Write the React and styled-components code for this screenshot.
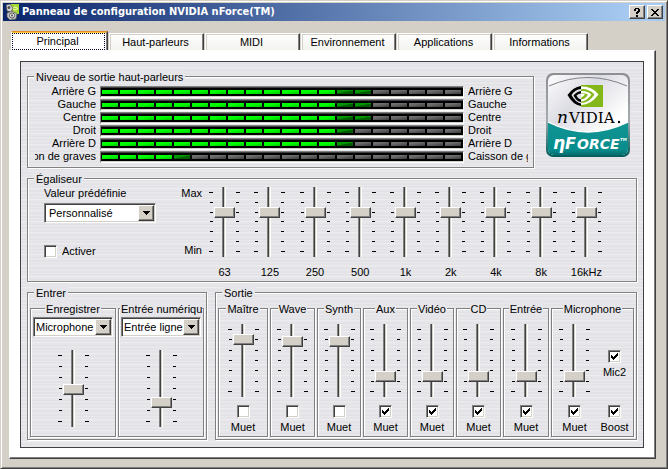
import React from 'react';
import styled, { createGlobalStyle, css } from 'styled-components';

const colors = {
  face: '#d4d0c8',
  shadow: '#808080',
  dark: '#404040',
  light: '#ffffff',
  metal: '#e6e6ea',
  navy: '#0a246a',
  sky: '#a6caf0'
};

const raised = css`
  border: 1px solid;
  border-color: ${colors.light} ${colors.dark} ${colors.dark} ${colors.light};
  box-shadow: inset -1px -1px 0 ${colors.shadow};
`;

const sunken = css`
  border: 1px solid;
  border-color: ${colors.shadow} ${colors.light} ${colors.light} ${colors.shadow};
  box-shadow: inset 1px 1px 0 ${colors.dark}, inset -1px -1px 0 ${colors.face};
`;

const GlobalStyle = createGlobalStyle`
  * {
    box-sizing: border-box;
  }

  body {
    margin: 0;
    background: ${colors.face};
  }

  body, button, input, select {
    font-family: "Liberation Sans", Arial, sans-serif;
    font-size: 11px;
    line-height: 13px;
    color: #000;
  }
`;

const Window = styled.main`
  min-height: 100vh;
  padding: 1px 2px 9px 1px;
  background: ${colors.face};
  border: 1px solid;
  border-color: ${colors.face} ${colors.dark} ${colors.dark} ${colors.face};
  box-shadow: inset 1px 1px 0 ${colors.light}, inset -1px -1px 0 ${colors.shadow};
`;

const TitleBar = styled.header`
  display: flex;
  align-items: center;
  gap: 2px;
  height: 18px;
  margin: 1px 0 0 1px;
  padding: 0 2px;
  background: linear-gradient(to right, ${colors.navy}, ${colors.sky} 95%);
`;

const Title = styled.h1`
  flex: 1;
  margin: 0;
  font: bold 11px/16px "DejaVu Sans Condensed", "DejaVu Sans", sans-serif;
  color: #fff;
  white-space: nowrap;
  overflow: hidden;
`;

const CaptionButton = styled.button`
  display: flex;
  align-items: center;
  justify-content: center;
  width: 16px;
  height: 14px;
  padding: 0;
  background: ${colors.face};
  ${raised}
`;

const Tabs = styled.nav`
  display: flex;
  align-items: flex-end;
  gap: 1px;
  height: 19px;
  margin: 10px 10px 0 9px;
`;

const Tab = styled.button`
  flex: 0 1 95px;
  height: 17px;
  padding: 0;
  border: 0;
  border-top: 1px solid ${colors.light};
  border-left: 1px solid ${colors.light};
  border-right: 1px solid ${colors.dark};
  box-shadow: inset -1px 0 0 ${colors.shadow}, inset 1px 1px 0 ${colors.face};
  background: linear-gradient(#fff, #f2f2ee);
  white-space: nowrap;

  ${props => props.$active && css`
    flex-basis: 97px;
    height: 19px;
    padding: 0 2px 0 0;
    border-top: 1px solid #e68b2c;
    box-shadow: inset -1px 0 0 ${colors.shadow}, inset 0 1px 0 #ffc73c;
    background: #fff;
  `}
`;

const TabText = styled.span`
  display: block;
  padding-right: 2px;
  line-height: 15px;
  border: 1px dotted ${props => (props.$active ? '#003' : 'transparent')};
`;

const Page = styled.section`
  margin: 0 9px 0 7px;
  padding: 10px 11px 10px 10px;
  background: #fff;
  border: 1px solid;
  border-color: ${colors.light} ${colors.dark} ${colors.dark} ${colors.light};
  box-shadow: inset -1px -1px 0 ${colors.shadow};
`;

const Panel = styled.div`
  padding: 6px 6px 7px;
  border: 1px solid ${colors.dark};
  background: repeating-linear-gradient(
    #e3e3e7 0 2px,
    #e9e9ec 2px 3px,
    #e4e4e8 3px 5px,
    #ededf0 5px 6px,
    #e6e6ea 6px 8px,
    #e1e1e5 8px 9px,
    #e8e8eb 9px 11px
  );
`;

const Row = styled.div`
  display: flex;
  align-items: flex-start;
  margin-bottom: 2px;
`;

const Group = styled.fieldset`
  min-width: 0;
  margin: 0;
  padding: 0;
  border: 1px solid ${colors.shadow};
  box-shadow: 1px 1px 0 ${colors.light}, inset 1px 1px 0 ${colors.light};
`;

const Legend = styled.legend`
  max-width: 100%;
  margin: 0 auto 0 6px;
  padding: 3px 2px 0;
  background: ${colors.metal};
  white-space: nowrap;
  overflow: hidden;
`;

const ChannelLegend = styled(Legend)`
  max-width: calc(100% - 2px);
  margin: 0 auto;
  padding: 3px 1px 0;
`;

const WideGroup = styled(Group)`
  flex: 1;
`;

const Levels = styled.div`
  padding: 1px 5px 4px 7px;
`;

const LevelRow = styled.div`
  display: grid;
  grid-template-columns: 61px 1fr 60px;
  column-gap: 4px;
  height: 13px;
`;

const LevelName = styled.span`
  display: flex;
  justify-content: ${props => (props.$end ? 'flex-end' : 'flex-start')};
  white-space: nowrap;
  overflow: hidden;
`;

const Meter = styled.div`
  display: flex;
  gap: 2px;
  height: 12px;
  margin-top: 1px;
  padding: 3px 2px 3px 1px;
  background: #000;
  border: 1px solid;
  border-color: ${colors.shadow} ${colors.light} ${colors.light} ${colors.shadow};
  box-shadow: inset 0 1px 0 ${colors.dark}, inset 0 -1px 0 ${colors.face};
`;

const segments = {
  on: 'linear-gradient(170deg, #00ff00 40%, #00c800)',
  peak: 'linear-gradient(170deg, #009800 45%, #005c00 55%)',
  off: 'linear-gradient(170deg, #6e6e6e 30%, #3c3c3c)'
};

const Segment = styled.span`
  flex: 1;
  background: ${props => segments[props.$state]};
`;

const Badge = styled.svg`
  flex: none;
  width: 84px;
  height: 84px;
  margin: 5px 7px 0 12px;
`;

const Equalizer = styled.div`
  display: flex;
  padding: 1px 27px 2px 16px;
`;

const Presets = styled.div`
  display: flex;
  flex-direction: column;
  width: 112px;
`;

const Label = styled.label`
  white-space: nowrap;
`;

const Combo = styled.div`
  display: grid;
  height: 20px;
  padding: 1px;
  background: #fff;
  ${sunken}
`;

const PresetCombo = styled(Combo)`
  margin: 3px 0 22px;
`;

const Select = styled.select`
  grid-area: 1 / 1;
  min-width: 0;
  width: 100%;
  padding: 0 0 0 ${props => (props.$compact ? '1px' : '3px')};
  border: 0;
  background: transparent;
  appearance: none;
  outline: 0;
`;

const Arrow = styled.span`
  grid-area: 1 / 1;
  justify-self: end;
  display: flex;
  align-items: center;
  justify-content: center;
  width: 16px;
  background: ${colors.face};
  pointer-events: none;
  ${raised}
`;

const CheckLabel = styled.label`
  display: flex;
  flex-direction: ${props => (props.$stacked ? 'column' : 'row')};
  align-items: center;
  gap: ${props => (props.$stacked ? '3px' : '5px')};
`;

const CheckBox = styled.input`
  width: 13px;
  height: 13px;
  margin: 0;
  appearance: none;
  background: #fff;
  ${sunken}

  &:checked {
    background: #fff url("data:image/svg+xml,%3Csvg xmlns='http://www.w3.org/2000/svg' width='7' height='7' shape-rendering='crispEdges'%3E%3Cpath d='M0 2h1v1h1v1h1v-1h1v-1h1v-1h1v-1h1v3h-1v1h-1v1h-1v1h-1v1h-1v-1h-1v-1h-1z'/%3E%3C/svg%3E") 2px 2px no-repeat;
  }
`;

const Range = styled.div`
  display: flex;
  flex-direction: column;
  justify-content: space-between;
  width: 46px;
  height: 70px;
  text-align: right;
`;

const Bands = styled.div`
  flex: 1;
  display: grid;
  grid-template-columns: repeat(9, 1fr);
`;

const Band = styled.label`
  display: flex;
  flex-direction: column;
  align-items: center;
  gap: 9px;
`;

const SliderBox = styled.span`
  display: flex;
  justify-content: center;
  gap: 1px;
  height: ${props => props.$length}px;
`;

const Ticks = styled.span`
  display: flex;
  flex-direction: column;
  justify-content: space-between;
  align-items: ${props => (props.$left ? 'flex-end' : 'flex-start')};
  width: 4px;
  padding: 5px 0;
`;

const Tick = styled.span`
  width: 3px;
  height: 1px;
  background: #000;

  &:first-child, &:last-child {
    width: 4px;
  }
`;

const SliderInput = styled.input`
  writing-mode: vertical-lr;
  direction: rtl;
  appearance: none;
  width: 21px;
  height: 100%;
  margin: 0;
  outline: 0;
  background: linear-gradient(
    to right,
    ${colors.shadow} 0 1px,
    ${colors.dark} 1px 2px,
    ${colors.face} 2px 3px,
    ${colors.light} 3px 4px
  ) 8px 0 / 4px 100% no-repeat;

  &::-webkit-slider-thumb {
    appearance: none;
    width: 21px;
    height: 11px;
    background: ${colors.face};
    ${raised}
  }
`;

const Mixer = styled.div`
  display: grid;
  grid-template-columns: 180fr 422fr;
  column-gap: 8px;
`;

const Inputs = styled.div`
  display: grid;
  grid-template-columns: repeat(2, minmax(0, 1fr));
  gap: 2px;
  padding: 0 2px 2px;
`;

const InputBody = styled.div`
  display: flex;
  flex-direction: column;
  gap: 13px;
  padding: 1px 2px 9px;
`;

const Outputs = styled.div`
  display: grid;
  grid-template-columns: 50fr 45fr 44fr 45fr 44fr 45fr 46fr 83fr;
  gap: 2px;
  padding: 0 2px 2px;
`;

const OutputBody = styled.div`
  display: flex;
  justify-content: center;
  padding: 8px 0 2px;
`;

const Channel = styled.div`
  display: flex;
  flex-direction: column;
  align-items: center;
  gap: 8px;
  min-width: 0;
  width: 44px;
`;

const Extras = styled.div`
  display: flex;
  flex-direction: column;
  justify-content: flex-end;
  gap: 26px;
  width: 36px;
`;

const tabs = ['Principal', 'Haut-parleurs', 'MIDI', 'Environnement', 'Applications', 'Informations'];

const levels = [
  { name: 'Arrière G', on: 13, peak: 2 },
  { name: 'Gauche', on: 13, peak: 2 },
  { name: 'Centre', on: 13, peak: 2 },
  { name: 'Droit', on: 13, peak: 1 },
  { name: 'Arrière D', on: 13, peak: 1 },
  { name: 'Caisson de graves', on: 4, peak: 1 }
];

const bands = ['63', '125', '250', '500', '1k', '2k', '4k', '8k', '16kHz'];

const inputs = [
  { name: 'Enregistrer', source: 'Microphone', value: 48 },
  { name: 'Entrée numérique', source: 'Entrée ligne', value: 29 }
];

const outputs = [
  { name: 'Maître', value: 84 },
  { name: 'Wave', value: 81 },
  { name: 'Synth', value: 81 },
  { name: 'Aux', value: 24, muted: true },
  { name: 'Vidéo', value: 24, muted: true },
  { name: 'CD', value: 24, muted: true },
  { name: 'Entrée', value: 24, muted: true },
  { name: 'Microphone', value: 24, muted: true, extras: true }
];

const segmentState = (index, { on, peak }) => {
  if (index < on) return 'on';
  return index < on + peak ? 'peak' : 'off';
};

const TickColumn = ({ left }) => (
  <Ticks $left={left}>
    {[0, 1, 2, 3, 4, 5, 6].map(i => <Tick key={i} />)}
  </Ticks>
);

const Slider = ({ length, value, label }) => (
  <SliderBox $length={length}>
    <TickColumn left />
    <SliderInput type='range' min='0' max='100' defaultValue={value} aria-label={label} />
    <TickColumn />
  </SliderBox>
);

const DropDown = ({ box: Box = Combo, id, value, label, compact }) => (
  <Box>
    <Select id={id} aria-label={label} defaultValue={value} $compact={compact}>
      <option>{value}</option>
    </Select>
    <Arrow>
      <svg width='7' height='4' shapeRendering='crispEdges'>
        <path d='M0 0h7v1h-1v1h-1v1h-1v1h-1v-1h-1v-1h-1v-1h-1z' />
      </svg>
    </Arrow>
  </Box>
);

const Check = ({ children, checked, stacked }) => (
  <CheckLabel $stacked={stacked}>
    <CheckBox type='checkbox' defaultChecked={checked} />
    {children}
  </CheckLabel>
);

const AppIcon = () => (
  <svg width='15' height='16' viewBox='0 0 15 16'>
    <path d='M4 0h10v10H6z' fill='#a4d832' />
    <path d='M7 4.500q3-3 6 0q-3 3-6 0' fill='none' stroke='#f0ffb0' />
    <path d='M1 1l4-1 3 4-2 4-4-1z' fill='#d4d4d4' stroke='#444' strokeWidth='0.7' />
    <circle cx='4' cy='3.5' r='1.5' fill='#555' />
    <path d='M2 9l5-2 5 3-1 5-6 1-3-3z' fill='#c4c4c4' stroke='#555' strokeWidth='0.7' />
    <circle cx='7' cy='11.5' r='2.5' fill='#f2f2f2' stroke='#333' strokeWidth='0.8' />
    <circle cx='7' cy='11.5' r='1' fill='#444' />
  </svg>
);

const Logo = () => (
  <Badge viewBox='0 0 84 84' role='img' aria-label='NVIDIA nForce'>
    <defs>
      <linearGradient id='rim' x1='0' y1='0' x2='0' y2='1'>
        <stop offset='0' stopColor='#8e8e94' />
        <stop offset='0.55' stopColor='#a4acb0' />
        <stop offset='1' stopColor='#045c5c' />
      </linearGradient>
      <linearGradient id='plate' x1='0' y1='0' x2='1' y2='1'>
        <stop offset='0' stopColor='#fff' />
        <stop offset='0.35' stopColor='#dcdce4' />
        <stop offset='0.7' stopColor='#fff' />
      </linearGradient>
      <linearGradient id='teal' x1='0' y1='0' x2='0' y2='1'>
        <stop offset='0' stopColor='#109494' />
        <stop offset='0.8' stopColor='#088c8c' />
        <stop offset='1' stopColor='#046464' />
      </linearGradient>
      <clipPath id='badge'>
        <rect x='2' y='2' width='80' height='80' rx='6' />
      </clipPath>
    </defs>
    <rect width='84' height='84' rx='7' fill='url(#rim)' />
    <g clipPath='url(#badge)'>
      <rect width='84' height='84' fill='url(#plate)' />
      <path d='M3 13Q42 -4 81 13' fill='none' stroke='#808088' />
      <path d='M0 48Q42 70 84 48V84H0z' fill='url(#teal)' />
      <path d='M0 48Q42 70 84 48' fill='none' stroke='#fff' strokeWidth='1.500' />
    </g>
    <rect x='35' y='12' width='22' height='22' fill='#84b818' />
    <path d='M35 13Q27 14 21.500 22Q27 32 35 33V30.500Q29 29 25.500 22Q29 16.500 35 16z' />
    <path d='M35 18Q30.500 18.500 27.500 22.500Q30.500 28.500 35 29V26.500Q32 26 30.500 22.500Q32.500 20.500 35 20.500z' />
    <g fill='#fff'>
      <path d='M35 13.500Q46 13 52.500 21.500Q45 32 35 32V30Q43 30 48.500 21.500Q43 15.500 35 16z' />
      <path d='M35 18Q41.500 17.500 45.500 21.500Q41 28 35 28.500V26.500Q39.500 26 42 21.500Q39 19.500 35 20z' />
      <path d='M35 20.500Q37.500 20 39 21.500L35 25z' />
    </g>
    <text x='11' y='50' fontFamily='DejaVu Serif, serif' fontSize='17' fontStyle='italic'>n</text>
    <text x='23' y='50' fontFamily='DejaVu Serif, serif' fontSize='15'>VIDIA</text>
    <circle cx='73' cy='49' r='1.200' />
    <g fill='#fff' fontFamily='DejaVu Sans, sans-serif' fontWeight='bold' fontStyle='italic'>
      <text x='7' y='76' fontSize='17'>η</text>
      <text x='19' y='76' fontSize='16'>F</text>
      <text x='31' y='76' fontSize='14'>ORCE</text>
      <text x='74' y='68' fontSize='4'>TM</text>
    </g>
  </Badge>
);

 /**
  * Speaker output levels with one meter per channel
  **/
const SpeakerLevels = () => (
  <WideGroup>
    <Legend>Niveau de sortie haut-parleurs</Legend>
    <Levels>
      {levels.map(level => (
        <LevelRow key={level.name}>
          <LevelName $end>{level.name}</LevelName>
          <Meter
            role='meter'
            aria-label={level.name}
            aria-valuemin={0}
            aria-valuemax={20}
            aria-valuenow={level.on}
          >
            {Array.from({ length: 20 }, (_, i) => (
              <Segment key={i} $state={segmentState(i, level)} />
            ))}
          </Meter>
          <LevelName>{level.name}</LevelName>
        </LevelRow>
      ))}
    </Levels>
  </WideGroup>
);

const EqualizerGroup = () => (
  <WideGroup>
    <Legend>Égaliseur</Legend>
    <Equalizer>
      <Presets>
        <Label htmlFor='preset'>Valeur prédéfinie</Label>
        <DropDown box={PresetCombo} id='preset' value='Personnalisé' />
        <Check>Activer</Check>
      </Presets>
      <Range>
        <span>Max</span>
        <span>Min</span>
      </Range>
      <Bands>
        {bands.map(band => (
          <Band key={band}>
            <Slider length={70} value={66} />
            {band}
          </Band>
        ))}
      </Bands>
    </Equalizer>
  </WideGroup>
);

const InputGroup = () => (
  <Group>
    <Legend>Entrer</Legend>
    <Inputs>
      {inputs.map(input => (
        <Group key={input.name}>
          <ChannelLegend>{input.name}</ChannelLegend>
          <InputBody>
            <DropDown value={input.source} label={input.name} compact />
            <Slider length={77} value={input.value} label={input.name} />
          </InputBody>
        </Group>
      ))}
    </Inputs>
  </Group>
);

const OutputGroup = () => (
  <Group>
    <Legend>Sortie</Legend>
    <Outputs>
      {outputs.map(output => (
        <Group key={output.name}>
          <ChannelLegend>{output.name}</ChannelLegend>
          <OutputBody>
            <Channel>
              <Slider length={73} value={output.value} label={output.name} />
              <Check stacked checked={output.muted}>Muet</Check>
            </Channel>
            {output.extras && (
              <Extras>
                <Check stacked checked>Mic2</Check>
                <Check stacked checked>Boost</Check>
              </Extras>
            )}
          </OutputBody>
        </Group>
      ))}
    </Outputs>
  </Group>
);

const App = () => (
  <>
    <GlobalStyle />
    <Window>
      <TitleBar>
        <AppIcon />
        <Title>Panneau de configuration NVIDIA nForce(TM)</Title>
        <CaptionButton aria-label='Aide'>
          <svg width='6' height='9' shapeRendering='crispEdges'>
            <path d='M1 0h4v1h1v3h-1v1h-1v1h-2v-2h1v-1h1v-2h-2v2h-2v-2h1zM2 7h2v2h-2z' />
          </svg>
        </CaptionButton>
        <CaptionButton aria-label='Fermer'>
          <svg width='8' height='7' shapeRendering='crispEdges'>
            <path d='M0 0h2v1h1v1h2v-1h1v-1h2v1h-1v1h-1v1h-1v1h1v1h1v1h1v1h-2v-1h-1v-1h-2v1h-1v1h-2v-1h1v-1h1v-1h1v-1h-1v-1h-1v-1h-1z' />
          </svg>
        </CaptionButton>
      </TitleBar>
      <Tabs role='tablist'>
        {tabs.map((tab, i) => (
          <Tab key={tab} role='tab' aria-selected={i === 0} $active={i === 0}>
            <TabText $active={i === 0}>{tab}</TabText>
          </Tab>
        ))}
      </Tabs>
      <Page>
        <Panel>
          <Row>
            <SpeakerLevels />
            <Logo />
          </Row>
          <Row>
            <EqualizerGroup />
          </Row>
          <Mixer>
            <InputGroup />
            <OutputGroup />
          </Mixer>
        </Panel>
      </Page>
    </Window>
  </>
);

export default App;
